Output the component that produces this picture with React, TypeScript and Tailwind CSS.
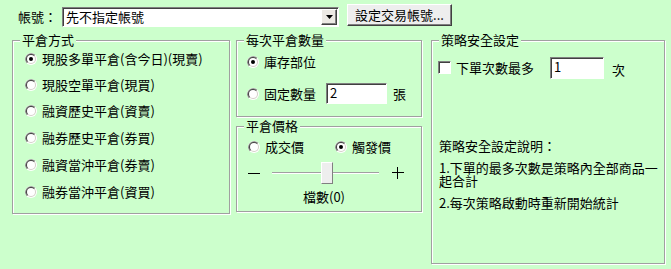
import React from "react";

const Radio = ({ checked = false }: { checked?: boolean }) => (
  <svg width="12" height="12" viewBox="0 0 12 12" className="shrink-0">
    <circle cx="6" cy="6" r="6" fill="#ffffff" />
    <path d="M6 6 L1.76 10.24 A6 6 0 0 1 10.24 1.76 Z" fill="#808080" />
    <circle cx="6" cy="6" r="5" fill="#d4d0c8" />
    <path d="M6 6 L2.46 9.54 A5 5 0 0 1 9.54 2.46 Z" fill="#404040" />
    <circle cx="6" cy="6" r="4" fill="#ffffff" />
    {checked && <circle cx="6" cy="6" r="2" fill="#000000" />}
  </svg>
);

const RadioItem = ({
  label,
  checked,
  className = "",
}: {
  label: string;
  checked?: boolean;
  className?: string;
}) => (
  <div className={`flex items-center h-[16px] gap-[5px] ${className}`}>
    <Radio checked={checked} />
    <span className="leading-[16px] whitespace-nowrap">{label}</span>
  </div>
);

const Group = ({
  title,
  className = "",
  children,
}: {
  title: string;
  className?: string;
  children?: React.ReactNode;
}) => (
  <div
    className={`relative border border-[#a0a0a0] shadow-[inset_1px_1px_0_#ffffff,1px_1px_0_#ffffff] ${className}`}
  >
    <span className="absolute -top-[9px] left-[7px] px-[2px] bg-[#ccffcc] leading-[16px] whitespace-nowrap">
      {title}
    </span>
    {children}
  </div>
);

const TextBox = ({ value, className = "" }: { value: string; className?: string }) => (
  <div
    className={`bg-white border border-t-[#808080] border-l-[#808080] border-b-white border-r-white shadow-[inset_1px_1px_0_#404040] pl-[3px] leading-[18px] ${className}`}
  >
    {value}
  </div>
);

export default function App() {
  const methods = [
    "現股多單平倉(含今日)(現賣)",
    "現股空單平倉(現買)",
    "融資歷史平倉(資賣)",
    "融券歷史平倉(券買)",
    "融資當沖平倉(券賣)",
    "融券當沖平倉(資買)",
  ];

  return (
    <div className="w-[671px] h-[269px] bg-[#ccffcc] text-[13px] text-black overflow-hidden font-['Noto_Sans_CJK_TC','Liberation_Sans',sans-serif]">
      {/* account row */}
      <div className="flex items-start h-[40px] pt-[4px] pl-[18px]">
        <span className="w-[44px] mt-[4px] leading-[18px]">帳號：</span>
        <div className="mt-[3px] w-[277px] h-[20px] relative bg-white border border-t-[#808080] border-l-[#808080] border-b-white border-r-white shadow-[inset_1px_1px_0_#404040] flex items-center">
          <span className="pl-[3px] leading-[18px]">先不指定帳號</span>
          <div className="absolute right-[1px] top-[1px] w-[16px] h-[16px] bg-[#ece9e4] border border-t-white border-l-white border-b-[#404040] border-r-[#404040] shadow-[inset_-1px_-1px_0_#808080] flex items-center justify-center">
            <svg width="7" height="4" viewBox="0 0 7 4">
              <path d="M0 0 H7 L3.5 4 Z" fill="#000" />
            </svg>
          </div>
        </div>
        <div className="ml-[8px] w-[105px] h-[22px] bg-[#eeeeee] border border-t-white border-l-white border-b-[#404040] border-r-[#404040] shadow-[inset_-1px_-1px_0_#808080] flex items-center justify-center leading-[18px] whitespace-nowrap">
          設定交易帳號...
        </div>
      </div>

      {/* groups */}
      <div className="flex items-start pl-[12px]">
        <Group title="平倉方式" className="w-[218px] h-[174px]">
          <div className="flex flex-col gap-[10px] pt-[10px] pl-[12px]">
            {methods.map((m, i) => (
              <RadioItem key={m} label={m} checked={i === 0} className={i >= 3 ? "mt-[1px]" : ""} />
            ))}
          </div>
        </Group>

        <div className="ml-[6px] flex flex-col gap-[9px]">
          <Group title="每次平倉數量" className="w-[186px] h-[77px]">
            <div className="flex flex-col pt-[13px] pl-[10px]">
              <RadioItem label="庫存部位" checked />
              <div className="flex items-center mt-[13px]">
                <RadioItem label="固定數量" className="w-[79px]" />
                <TextBox value="2" className="w-[61px] h-[21px]" />
                <span className="ml-[6px]">張</span>
              </div>
            </div>
          </Group>

          <Group title="平倉價格" className="w-[186px] h-[86px]">
            <div className="flex flex-col pt-[12px] pl-[11px]">
              <div className="flex items-center">
                <RadioItem label="成交價" className="w-[87px]" />
                <RadioItem label="觸發價" checked />
              </div>
              <div className="flex items-center h-[22px] mt-[7px]">
                <span className="w-[12px] h-[1px] bg-black" />
                <div className="relative ml-[12px] w-[107px] h-[22px] flex items-center">
                  <div className="w-full h-[2px] border-t border-t-[#a0a0a0] border-b border-b-white" />
                  <div className="absolute left-[49px] top-0 w-[12px] h-[22px] bg-[#eeeeee] border border-t-white border-l-white border-b-[#808080] border-r-[#808080]" />
                </div>
                <div className="relative ml-[13px] w-[12px] h-[12px]">
                  <span className="absolute left-0 top-[5px] w-[12px] h-[1px] bg-black" />
                  <span className="absolute left-[5px] top-0 w-[1px] h-[12px] bg-black" />
                </div>
              </div>
              <div className="pl-[55px] mt-[5px] leading-[16px]">檔數(0)</div>
            </div>
          </Group>
        </div>

        <Group title="策略安全設定" className="ml-[9px] w-[234px] h-[224px]">
          <div className="flex items-center pt-[15px] pl-[6px]">
            <div className="w-[13px] h-[13px] bg-white border border-t-[#808080] border-l-[#808080] border-b-white border-r-white shadow-[inset_1px_1px_0_#404040]" />
            <span className="ml-[5px] w-[94px] leading-[16px]">下單次數最多</span>
            <TextBox value="1" className="w-[54px] h-[22px]" />
            <span className="ml-[8px] mt-[4px]">次</span>
          </div>
          <div className="pl-[7px] pt-[59px] w-[228px] flex flex-col gap-[9px] leading-[13px]">
            <p>策略安全設定說明：</p>
            <p>1.下單的最多次數是策略內全部商品一起合計</p>
            <p>2.每次策略啟動時重新開始統計</p>
          </div>
        </Group>
      </div>
    </div>
  );
}
